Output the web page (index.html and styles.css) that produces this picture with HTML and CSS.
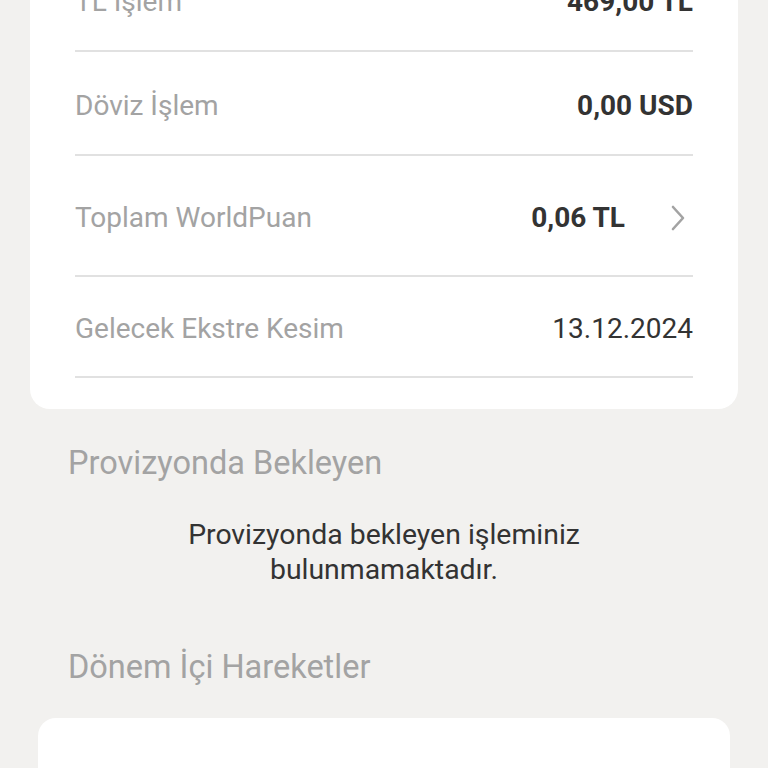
FILE: index.html
```html
<!DOCTYPE html>
<html lang="tr">
<head>
    <meta charset="UTF-8">
    <meta name="viewport" content="width=device-width, initial-scale=1.0">
    <title>Kart Detay</title>
    <link rel="stylesheet" href="styles.css">
</head>
<body>

    <div class="summary-card">
        <div class="row row-first">
            <span class="label">TL İşlem</span>
            <span class="value">469,00 TL</span>
        </div>
        <div class="row row-second">
            <span class="label">Döviz İşlem</span>
            <span class="value">0,00 USD</span>
        </div>
        <div class="row row-points">
            <span class="label">Toplam WorldPuan</span>
            <span class="value-group">
                <span class="value">0,06 TL</span>
                <svg class="chevron" width="18" height="28" viewBox="0 0 18 28">
                    <path d="M4 3 L14 14 L4 25" fill="none" stroke="#a3a3a3" stroke-width="2.6" stroke-linecap="round" stroke-linejoin="round"/>
                </svg>
            </span>
        </div>
        <div class="row row-last">
            <span class="label">Gelecek Ekstre Kesim</span>
            <span class="value plain">13.12.2024</span>
        </div>
    </div>

    <h2 class="section-title">Provizyonda Bekleyen</h2>
    <p class="empty-text">Provizyonda bekleyen işleminiz<br>bulunmamaktadır.</p>

    <h2 class="section-title second">Dönem İçi Hareketler</h2>
    <div class="list-card"></div>

</body>
</html>
```

FILE: styles.css
```css
body {
    font-family: Roboto, "Noto Sans", sans-serif;
    margin: 0;
    padding: 0;
    background-color: #f2f1ef;
    overflow: hidden;
}

.summary-card {
    background-color: #ffffff;
    margin: -52px 30px 0 30px;
    padding: 0 45px 31px 45px;
    border-radius: 0 0 20px 20px;
}

.row {
    display: flex;
    align-items: center;
    justify-content: space-between;
    padding-top: 4px;
    border-bottom: 2px solid #e1e1e1;
    box-sizing: border-box;
}
.row-first {
    height: 104px;
}
.row-second {
    height: 104px;
}
.row-points {
    height: 121px;
}
.row-last {
    height: 101px;
}

.label {
    font-size: 28px;
    color: #a3a3a3;
}
.value {
    font-size: 28px;
    font-weight: bold;
    color: #333333;
}
.value.plain {
    font-weight: normal;
}

.value-group {
    display: flex;
    align-items: center;
}
.chevron {
    margin-left: 44px;
    margin-right: 6px;
}

.section-title {
    font-size: 32.5px;
    font-weight: normal;
    color: #a3a3a3;
    margin: 34px 0 0 68px;
    line-height: 40px;
}
.section-title.second {
    margin-top: 60px;
}

.empty-text {
    text-align: center;
    font-size: 28.4px;
    line-height: 35px;
    color: #333333;
    margin: 34px 0 0 0;
}

.list-card {
    background-color: #ffffff;
    margin: 31px 38px 0 38px;
    height: 200px;
    border-radius: 18px;
}
```
